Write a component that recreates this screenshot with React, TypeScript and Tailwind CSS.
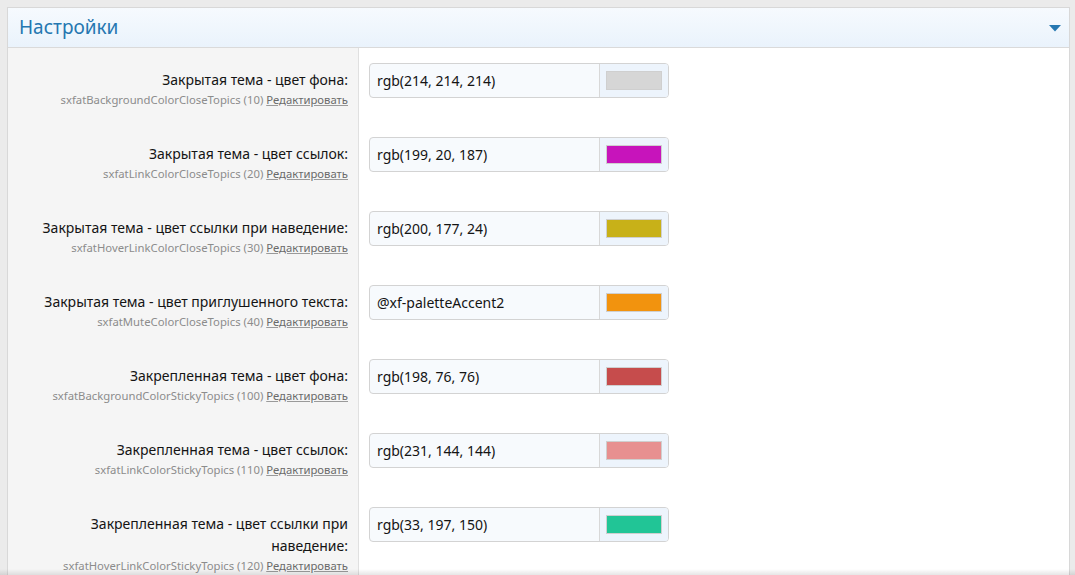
const FONT = "font-['Segoe_UI','Noto_Sans','Liberation_Sans',sans-serif]"

type Option = {
  label: string
  id: string
  order: number
  value: string
  color: string
}

const OPTIONS: Option[] = [
  { label: 'Закрытая тема - цвет фона:', id: 'sxfatBackgroundColorCloseTopics', order: 10, value: 'rgb(214, 214, 214)', color: 'rgb(214, 214, 214)' },
  { label: 'Закрытая тема - цвет ссылок:', id: 'sxfatLinkColorCloseTopics', order: 20, value: 'rgb(199, 20, 187)', color: 'rgb(199, 20, 187)' },
  { label: 'Закрытая тема - цвет ссылки при наведение:', id: 'sxfatHoverLinkColorCloseTopics', order: 30, value: 'rgb(200, 177, 24)', color: 'rgb(200, 177, 24)' },
  { label: 'Закрытая тема - цвет приглушенного текста:', id: 'sxfatMuteColorCloseTopics', order: 40, value: '@xf-paletteAccent2', color: 'rgb(242, 147, 14)' },
  { label: 'Закрепленная тема - цвет фона:', id: 'sxfatBackgroundColorStickyTopics', order: 100, value: 'rgb(198, 76, 76)', color: 'rgb(198, 76, 76)' },
  { label: 'Закрепленная тема - цвет ссылок:', id: 'sxfatLinkColorStickyTopics', order: 110, value: 'rgb(231, 144, 144)', color: 'rgb(231, 144, 144)' },
  { label: 'Закрепленная тема - цвет ссылки при наведение:', id: 'sxfatHoverLinkColorStickyTopics', order: 120, value: 'rgb(33, 197, 150)', color: 'rgb(33, 197, 150)' },
]

function OptionRow({ opt }: { opt: Option }) {
  return (
    <div className="flex">
      <div className="w-[351px] shrink-0 bg-[#f5f5f5] border-r border-[#e0e0e0] px-[10px] pt-[21px] pb-[13px] text-right">
        <div className="text-[14px] leading-[22px] text-[#141414]">{opt.label}</div>
        <div className="text-[11.3px] leading-[18px] text-[#8c8c8c]">
          {opt.id} ({opt.order}){' '}
          <a href="#" className="text-[#6a6a6a] underline decoration-[#9a9a9a]">
            Редактировать
          </a>
        </div>
      </div>
      <div className="flex-1 pl-[10px] pt-[15px]">
        <div className="flex w-[300px] h-[35px] border border-[#d3d3d3] rounded-[4px] bg-[#f7fafd] overflow-hidden">
          <input
            readOnly
            value={opt.value}
            className="flex-1 min-w-0 bg-transparent pl-[7px] text-[14px] text-[#141414] outline-none"
          />
          <div className="w-[69px] border-l border-[#d8d8d8] bg-[#edf4fc] flex items-center pl-[6px]">
            <span
              className="block w-[56px] h-[19px] border border-[#cfcfcf]"
              style={{ backgroundColor: opt.color }}
            />
          </div>
        </div>
      </div>
    </div>
  )
}

export default function App() {
  return (
    <div className={`${FONT} relative h-[575px] overflow-hidden bg-[#ebebeb] pt-[7px] pl-[7px] pr-[5px]`}>
      <div className="border border-[#d8d8d8] bg-white">
        <div className="h-[40px] flex items-center justify-between border-b border-[#dadada] bg-gradient-to-b from-[#f6fafe] to-[#eaf3fc] pl-[11px] pr-[8px]">
          <h2 className="text-[19px] text-[#2577b1]">Настройки</h2>
          <svg width="12" height="7" viewBox="0 0 12 7" className="mt-[1px]">
            <path d="M0 0h12L6 6.5z" fill="#2577b1" />
          </svg>
        </div>
        <div>
          {OPTIONS.map((o) => (
            <OptionRow key={o.id} opt={o} />
          ))}
        </div>
      </div>
      <div className="absolute left-0 right-0 bottom-0 h-[6px] bg-gradient-to-b from-transparent to-black/10" />
    </div>
  )
}
